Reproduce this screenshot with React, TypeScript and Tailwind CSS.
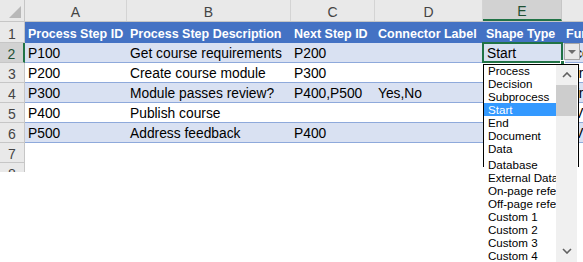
// Excel sheet with a data-validation dropdown open on the Shape Type column

const cols = [
  { letter: "A", w: "w-[102px]" },
  { letter: "B", w: "w-[164px]" },
  { letter: "C", w: "w-[84px]" },
  { letter: "D", w: "w-[108px]" },
  { letter: "E", w: "w-[79px]" },
  { letter: "F", w: "w-[80px]" },
];

const rows = [
  ["Process Step ID", "Process Step Description", "Next Step ID", "Connector Label", "Shape Type", "Function"],
  ["P100", "Get course requirements", "P200", "", "Start", "Accountant"],
  ["P200", "Create course module", "P300", "", "", "Writer"],
  ["P300", "Module passes review?", "P400,P500", "Yes,No", "", "Writer"],
  ["P400", "Publish course", "", "", "", "AV Team"],
  ["P500", "Address feedback", "P400", "", "", "AV Team"],
  ["", "", "", "", "", ""],
  ["", "", "", "", "", ""],
];

const shapes = ["Process", "Decision", "Subprocess", "Start", "End", "Document", "Data", "Database", "External Data", "On-page reference", "Off-page reference", "Custom 1", "Custom 2", "Custom 3", "Custom 4"];

const Chevron = ({ up }: { up?: boolean }) => (
  <svg width="10" height="6" viewBox="0 0 10 6">
    <polyline points={up ? "1,5 5,1 9,5" : "1,1 5,5 9,1"} fill="none" stroke="#606060" strokeWidth="1.6" />
  </svg>
);

const ColumnHeader = () => (
  <div className="flex h-[22px] shrink-0 border-b border-[#c6c6c6] bg-[#e9e9e9] text-[14px] text-[#444]">
    <div className="relative w-[25px] shrink-0 border-r border-[#c6c6c6]">
      <svg className="absolute right-[3px] bottom-[3px]" width="12" height="12" viewBox="0 0 12 12">
        <polygon points="12,0 12,12 0,12" fill="#b8b8b8" />
      </svg>
    </div>
    {cols.map((c) =>
      c.letter === "E" ? (
        <div key={c.letter} className={`${c.w} shrink-0 flex items-center justify-center pt-[4px] bg-[#d2d2d2] border-b-2 border-[#217346] border-r border-r-[#c6c6c6] text-[#1f5034]`}>
          {c.letter}
        </div>
      ) : (
        <div key={c.letter} className={`${c.w} shrink-0 flex items-center justify-center pt-[4px] border-r border-[#d4d4d4]`}>
          {c.letter}
        </div>
      )
    )}
  </div>
);

const SheetRow = ({ cells, index }: { cells: string[]; index: number }) => {
  const isHeader = index === 0;
  const inTable = index <= 5;
  const banded = index % 2 === 1 && inTable;
  const selected = index === 1;

  let rowBg = "bg-white";
  if (isHeader) rowBg = "bg-[#4472c4] text-white font-bold text-[12.5px]";
  else if (banded) rowBg = "bg-[#d9e1f2] text-black text-[13.8px]";
  else rowBg = "bg-white text-black text-[13.8px]";

  return (
    <div className={`flex shrink-0 ${isHeader ? "h-[21px]" : "h-[20px]"}`}>
      <div
        className={`w-[25px] shrink-0 flex items-center justify-center pt-[4px] text-[14px] border-b border-[#c6c6c6] ${
          selected ? "bg-[#d2d2d2] text-[#1f5034] border-r-2 border-r-[#217346]" : "bg-[#e9e9e9] text-[#444] border-r border-r-[#c6c6c6]"
        }`}
      >
        {index + 1}
      </div>
      <div className={`flex flex-1 ${rowBg} ${inTable && !isHeader ? "border-b border-[#8ea9db]" : ""}`}>
        {cols.map((c, i) => (
          <div key={c.letter} className={`${c.w} shrink-0 relative flex items-center pt-[4px] px-[3px] whitespace-nowrap`}>
            {selected && c.letter === "E" ? (
              <>
                <span className="pl-[1px]">{cells[i]}</span>
                <div className="absolute -left-[1px] -top-[1px] -right-[1px] -bottom-[1px] border-2 border-[#217346]" />
                <div className="absolute -right-[3px] -bottom-[3px] w-[5px] h-[5px] bg-[#217346] border border-white" />
              </>
            ) : (
              <span className={c.letter === "F" ? "pl-[1px]" : ""}>{cells[i]}</span>
            )}
          </div>
        ))}
      </div>
    </div>
  );
};

const ShapeList = () => (
  <div className="absolute left-[483px] top-[64px] w-[96px] h-[198px] flex font-['Liberation_Sans',Arial,sans-serif] text-[11.6px] text-black">
    <div className="w-[73px] shrink-0 bg-white pl-[1px] overflow-hidden">
      {shapes.map((s) => (
        <div
          key={s}
          className={`h-[13px] leading-[14px] pl-[4px] whitespace-nowrap ${s === "Start" ? "bg-[#3399ff] text-white" : ""} ${s === "Database" ? "mt-[3px]" : ""}`}
        >
          {s}
        </div>
      ))}
    </div>
    <div className="w-[21px] shrink-0 flex flex-col bg-[#f0f0f0]">
      <div className="h-[21px] flex items-center justify-center pt-[1px]">
        <Chevron up />
      </div>
      <div className="h-[31px] bg-[#cdcdcd]" />
      <div className="flex-1" />
      <div className="h-[21px] flex items-center justify-center pb-[2px]">
        <Chevron />
      </div>
    </div>
    <div className="flex-1 bg-white" />
    <div className="absolute left-0 top-0 w-[96px] h-[103px] border-l border-t border-r border-black pointer-events-none" />
  </div>
);

export default function App() {
  return (
    <div className="relative w-[583px] h-[262px] overflow-hidden bg-white font-['Liberation_Sans',Arial,sans-serif]">
      <div className="flex flex-col h-[172px] overflow-hidden w-[640px]">
        <ColumnHeader />
        {rows.map((r, i) => (
          <SheetRow key={i} cells={r} index={i} />
        ))}
      </div>
      {/* dropdown arrow of the validated cell */}
      <div className="absolute left-[564px] top-[43px] w-[16px] h-[17px] bg-[#e8e8e8] border border-[#a6a6a6] flex items-center justify-center">
        <div className="w-0 h-0 border-l-[4px] border-r-[4px] border-t-[4px] border-l-transparent border-r-transparent border-t-[#6d6d6d]" />
      </div>
      <ShapeList />
    </div>
  );
}
